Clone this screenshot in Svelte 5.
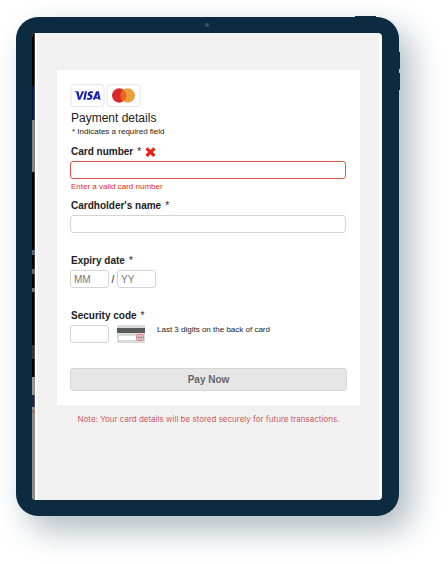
<script>
  let cardNumber = $state('');
  let name = $state('');
  let month = $state('');
  let year = $state('');
  let code = $state('');
</script>

<main class="page">
  <div class="tablet">
    <span class="tablet__camera"></span>
    <span class="tablet__key tablet__key--power"></span>
    <span class="tablet__key tablet__key--up"></span>
    <span class="tablet__key tablet__key--down"></span>

    <div class="screen">
      <div class="backdrop"></div>
      <div class="content">
        <form class="card" onsubmit={(e) => e.preventDefault()}>
          <div class="brands">
            <svg class="brand" viewBox="0 0 34 23" role="img" aria-label="Visa">
              <rect x="0.5" y="0.5" width="33" height="22" rx="3" fill="#fff" stroke="#e6e6ea" />
              <g fill="#1721b5">
                <path d="M4 7.3h3.1c.6 0 .9.3 1 .8l1 4.8 2.3-5.6h2.2L9.8 15.8H7.6L6 9.2C5.8 8.4 5 7.9 4 7.6z" />
                <path d="M14.4 7.3h2.1l-1.6 8.5h-2.1z" />
                <path d="M22.6 7.6l-.4 1.7c-1.2-.5-2.8-.5-2.9.2 0 .9 3 1 2.8 3.4-.2 2.6-3.2 3.5-5.9 2.6l.4-1.8c1.3.6 3.2.6 3.3-.4.1-1-2.9-1-2.7-3.5.2-2.3 2.9-3.2 5.4-2.2z" />
                <path fill-rule="evenodd" d="M26.3 7.3h2l1.8 8.5h-2l-.3-1.3h-2.8l-.6 1.3h-2.2l3.2-7.8c.2-.5.5-.7.9-.7zM27 9.9l-1.2 3h1.7z" />
              </g>
            </svg>
            <svg class="brand" viewBox="0 0 34 23" role="img" aria-label="Mastercard">
              <rect x="0.5" y="0.5" width="33" height="22" rx="3" fill="#fff" stroke="#e6e6ea" />
              <circle cx="12.7" cy="11.5" r="7.2" fill="#d9292b" />
              <circle cx="21.3" cy="11.5" r="7.2" fill="#eba03d" />
              <path d="M17 5.7a7.2 7.2 0 0 1 0 11.6a7.2 7.2 0 0 1 0-11.6z" fill="#ec6422" />
            </svg>
          </div>

          <h1>Payment details</h1>
          <p class="hint"><span>*</span> Indicates a required field</p>

          <div class="field field--invalid">
            <label for="card-number">
              Card number <span class="star">*</span>
              <svg class="cross" viewBox="0 0 11 10" aria-hidden="true">
                <path d="M.4 2.4L2.7.2 5.5 2.9 8.3.2l2.3 2.2L7.8 5l2.8 2.7-2.3 2.2-2.8-2.7-2.8 2.7L.4 7.7 3.2 5z" fill="#e8230f" />
              </svg>
            </label>
            <input id="card-number" inputmode="numeric" aria-invalid="true" aria-describedby="card-error" bind:value={cardNumber} />
            <p id="card-error" class="error">Enter a valid card number</p>
          </div>

          <div class="field">
            <label for="holder">Cardholder's name <span class="star">*</span></label>
            <input id="holder" bind:value={name} />
          </div>

          <div class="field">
            <label for="month">Expiry date <span class="star">*</span></label>
            <div class="row">
              <input id="month" class="short" placeholder="MM" maxlength="2" bind:value={month} />
              <span class="slash">/</span>
              <input class="short" placeholder="YY" maxlength="2" aria-label="Expiry year" bind:value={year} />
            </div>
          </div>

          <div class="field">
            <label for="code">Security code <span class="star">*</span></label>
            <div class="row">
              <input id="code" class="short" maxlength="3" bind:value={code} />
              <svg class="card-back" viewBox="0 0 28 18" aria-hidden="true">
                <rect width="28" height="18" rx="1" fill="#dadada" />
                <rect y="3" width="28" height="5" fill="#5a5c5c" />
                <rect x="2" y="11" width="18" height="4" fill="#fff" />
                <rect x="19.5" y="9.5" width="7" height="6" rx="1" fill="#dcc6c8" stroke="#ea7a80" />
                <path d="M21 12.5h4.5" stroke="#777" stroke-width="1.5" stroke-dasharray="1 .5" />
              </svg>
              <span class="code-hint">Last 3 digits on the back of card</span>
            </div>
          </div>

          <button type="submit">Pay Now</button>
        </form>

        <p class="note">Note: Your card details will be stored securely for future transactions.</p>
      </div>
    </div>
  </div>
</main>

<style>
  :global(body) {
    margin: 0;
    background: #fff;
  }

  .page {
    padding: 17px 49px 48px 16px;
    overflow: hidden;
    font-family: "Liberation Sans", Arial, sans-serif;
    color: #222;
  }

  .tablet {
    position: relative;
    padding: 16px 17px 16px 16px;
    border-radius: 22px;
    background: #0d2b40;
    box-shadow: 12px 14px 32px rgba(13, 43, 64, 0.32);
  }

  .tablet__camera {
    position: absolute;
    top: 6px;
    left: 50%;
    width: 4px;
    height: 4px;
    margin-left: -3px;
    border-radius: 50%;
    background: #3d5361;
  }

  .tablet__key {
    position: absolute;
    right: -1px;
    width: 3px;
    height: 17px;
    background: #0d2b40;
  }

  .tablet__key--power {
    top: -1px;
    right: 23px;
    width: 21px;
    height: 3px;
  }

  .tablet__key--up {
    top: 35px;
  }

  .tablet__key--down {
    top: 56px;
  }

  .screen {
    display: flex;
    border-radius: 4px;
    overflow: hidden;
    background: #fff;
  }

  /* sliver of the shop page behind the payment panel */
  .backdrop {
    width: 3px;
    flex: none;
    background:
      linear-gradient(to right, transparent 2px, rgba(130, 130, 130, 0.5) 2px),
      linear-gradient(
        #000 53px, #05194f 53px 87px, #858585 87px 139px, #000 139px 217px,
        #53617d 217px 222px, #000 222px 236px, #6b6259 236px 241px, #000 241px 255px,
        #77706a 255px 259px, #000 259px 312px, #333 312px 326px, #000 326px 344px,
        #999 344px 362px, #1c2544 362px 374px, #999 374px 377px, #a8684a 377px 379px,
        #8c8c8c 379px
      );
  }

  .content {
    flex: 1;
    margin: 0 3px 0 2px;
    padding: 37px 19px 76px 20px;
    background: #f1f1f1;
  }

  .card {
    padding: 14px 13px;
    background: #fff;
  }

  .brands {
    display: flex;
    gap: 1px;
    margin-bottom: 3px;
  }

  .brand {
    width: 35px;
    height: 23px;
  }

  h1 {
    margin: 0;
    padding-left: 1px;
    font-size: 12px;
    font-weight: 400;
    line-height: 16px;
  }

  p,
  .code-hint {
    margin: 0;
    font-size: 8px;
    line-height: 10px;
  }

  .hint {
    padding: 1px 0 0 2px;
    margin-bottom: 8px;
  }

  .field {
    margin-bottom: 21px;
  }

  .field--invalid {
    margin-bottom: 7px;
  }

  label {
    display: flex;
    align-items: center;
    gap: 4px;
    padding-left: 1px;
    margin-bottom: 2px;
    font-size: 10px;
    font-weight: 700;
    line-height: 14px;
  }

  .star {
    font-weight: 400;
  }

  .cross {
    width: 11px;
    height: 10px;
  }

  input {
    display: block;
    box-sizing: border-box;
    width: calc(100% - 1px);
    height: 18px;
    padding: 0 3px;
    border: 1px solid #d4d4d4;
    border-radius: 3px;
    background: #fff;
    font: inherit;
    font-size: 10px;
    color: #222;
  }

  input::placeholder {
    color: #777;
    opacity: 1;
  }

  .field--invalid input {
    border-color: #e9504a;
  }

  .error {
    padding-left: 1px;
    margin-top: 3px;
    color: #e02b20;
  }

  .row {
    display: flex;
    align-items: center;
  }

  .short {
    width: 39px;
  }

  .slash {
    width: 8px;
    font-size: 10px;
    text-align: center;
  }

  .card-back {
    width: 28px;
    height: 18px;
    margin: 0 12px 0 8px;
  }

  .code-hint {
    align-self: flex-start;
  }

  button {
    display: block;
    width: 100%;
    height: 23px;
    margin-top: 25px;
    padding: 0;
    border: 1px solid #d6d6d6;
    border-radius: 3px;
    background: #e6e6e6;
    font: inherit;
    font-size: 10px;
    font-weight: 700;
    color: #666;
    cursor: pointer;
  }

  .note {
    margin-top: 9px;
    font-family: Inter, "Open Sans", sans-serif;
    text-align: center;
    color: #cd5c5c;
  }
</style>
